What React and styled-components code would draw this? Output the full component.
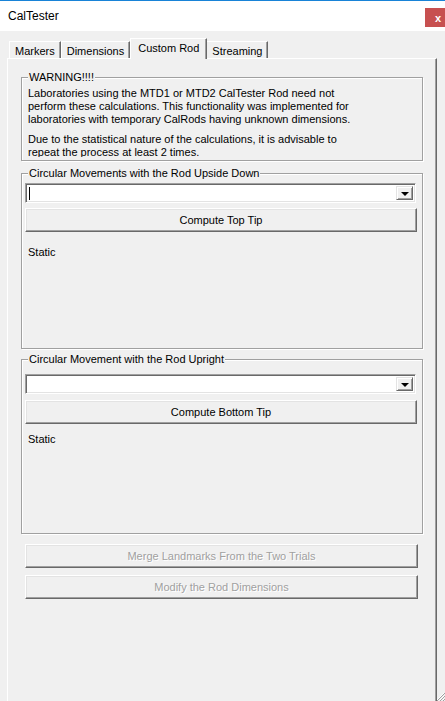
import styled, { createGlobalStyle } from 'styled-components';

const GlobalStyle = createGlobalStyle`
  html, body {
    margin: 0;
    padding: 0;
    background: #f0f0f0;
  }
  body {
    font-family: "Liberation Sans", Arial, sans-serif;
    font-size: 11px;
    color: #000;
  }
`;

const Window = styled.div`
  width: 445px;
  height: 701px;
  overflow: hidden;
  display: flex;
  flex-direction: column;
  border-top: 1px solid #1883d7;
  box-sizing: border-box;
  background: #f0f0f0;
`;

const TitleBar = styled.div`
  height: 30px;
  flex: none;
  background: #fff;
  display: flex;
  align-items: flex-start;
  padding-left: 8px;
`;

const Title = styled.span`
  font-size: 12px;
  line-height: 12px;
  margin-top: 9px;
`;

const CloseButton = styled.div`
  margin-left: auto;
  margin-top: 7px;
  width: 20px;
  height: 19px;
  background: #c75050;
  color: #fff;
  font-weight: bold;
  font-size: 11px;
  display: flex;
  align-items: center;
  justify-content: center;
  padding-left: 6px;
  box-sizing: border-box;
`;

const Body = styled.div`
  flex: 1;
  display: flex;
  flex-direction: column;
  padding: 7px 8px 0 7px;
  position: relative;
`;

const TabStrip = styled.div`
  display: flex;
  align-items: flex-end;
  height: 20px;
  padding-left: 2px;
`;

const Tab = styled.div`
  height: ${p => (p.active ? 21 : 17)}px;
  padding: ${p => (p.active ? '0 7px' : '0 5px')};
  margin: ${p => (p.active ? '0 -1px -1px 0' : '0')};
  box-sizing: border-box;
  display: flex;
  align-items: ${p => (p.active ? 'flex-start' : 'center')};
  padding-top: ${p => (p.active ? 3 : 1)}px;
  background: #f0f0f0;
  border-top: 1px solid #fff;
  border-left: 1px solid #fff;
  border-right: 1px solid #696969;
  box-shadow: inset -1px 0 0 #a0a0a0;
  position: relative;
  z-index: ${p => (p.active ? 2 : 1)};
  font-size: 11px;
  white-space: nowrap;
`;

const Panel = styled.div`
  flex: 1;
  display: flex;
  flex-direction: column;
  border-top: 1px solid #fff;
  border-left: 1px solid #fff;
  border-right: 1px solid #696969;
  box-shadow: inset -1px 0 0 #a0a0a0;
  padding: 0 13px 0 13px;
  box-sizing: border-box;
`;

const GroupBox = styled.div`
  position: relative;
  margin-top: ${p => p.top}px;
  height: ${p => p.height}px;
  flex: none;
  box-sizing: border-box;
  border: 1px solid #a0a0a0;
  box-shadow: 1px 1px 0 #fff, inset 1px 1px 0 #fff;
  padding: ${p => p.pad}px 5px 0 3px;
  display: flex;
  flex-direction: column;
`;

const Caption = styled.span`
  position: absolute;
  top: -7px;
  left: 6px;
  padding: 0 1px 0 1px;
  background: #f0f0f0;
  line-height: 13px;
  font-size: 11px;
`;

const WarningText = styled.div`
  height: ${p => p.height}px;
  overflow: hidden;
  padding-left: 3px;
  line-height: 13px;

  p {
    margin: 0 0 7px 0;
  }
`;

const Combo = styled.div`
  height: 20px;
  flex: none;
  box-sizing: border-box;
  background: #fff;
  border-top: 1px solid #a0a0a0;
  border-left: 1px solid #a0a0a0;
  border-right: 1px solid #fff;
  border-bottom: 1px solid #fff;
  box-shadow: inset 1px 1px 0 #696969, inset -1px -1px 0 #e3e3e3;
  display: flex;
  align-items: center;
  padding: 2px 2px 2px 3px;
  margin-right: 1px;
`;

const Caret = styled.span`
  width: 1px;
  height: 13px;
  background: #000;
`;

const DropButton = styled.div`
  margin-left: auto;
  width: 17px;
  height: 14px;
  box-sizing: border-box;
  background: #f0f0f0;
  border-top: 1px solid #e3e3e3;
  border-left: 1px solid #e3e3e3;
  border-right: 1px solid #696969;
  border-bottom: 1px solid #696969;
  box-shadow: inset 1px 1px 0 #fff, inset -1px -1px 0 #a0a0a0;
  display: flex;
  align-items: center;
  justify-content: center;

  &::after {
    content: '';
    border-left: 4px solid transparent;
    border-right: 4px solid transparent;
    border-top: 4px solid #000;
    margin-top: 1px;
  }
`;

const Button = styled.div`
  height: 24px;
  flex: none;
  box-sizing: border-box;
  margin-top: ${p => p.top || 0}px;
  background: #f0f0f0;
  border-top: 1px solid #fff;
  border-left: 1px solid #fff;
  border-right: 1px solid #696969;
  border-bottom: 1px solid #696969;
  box-shadow: inset -1px -1px 0 #a0a0a0, inset 1px 1px 0 #e3e3e3;
  display: flex;
  align-items: center;
  justify-content: center;
  color: ${p => (p.disabled ? '#a0a0a0' : '#000')};
  text-shadow: ${p => (p.disabled ? '1px 1px 0 #fff' : 'none')};
  font-size: 11px;
`;

const OuterButton = styled(Button)`
  margin-left: 4px;
  margin-right: 5px;
`;

const StaticLabel = styled.div`
  margin-top: ${p => p.top}px;
  padding-left: 3px;
  line-height: 13px;
`;

const Grip = styled.svg`
  position: absolute;
  right: 0;
  bottom: 0;
`;

const tabs = ['Markers', 'Dimensions', 'Custom Rod', 'Streaming'];

export default function App() {
  return (
    <>
      <GlobalStyle />
      <Window>
        <TitleBar>
          <Title>CalTester</Title>
          <CloseButton>x</CloseButton>
        </TitleBar>
        <Body>
          <TabStrip>
            {tabs.map(t => (
              <Tab key={t} active={t === 'Custom Rod'}>{t}</Tab>
            ))}
          </TabStrip>
          <Panel>
            <GroupBox top={18} height={84} pad={9}>
              <Caption>WARNING!!!!</Caption>
              <WarningText height={70}>
                <p>
                  Laboratories using the MTD1 or MTD2 CalTester Rod need not<br />
                  perform these calculations. This functionality was implemented for<br />
                  laboratories with temporary CalRods having unknown dimensions.
                </p>
                <p>
                  Due to the statistical nature of the calculations, it is advisable to<br />
                  repeat the process at least 2 times.
                </p>
              </WarningText>
            </GroupBox>

            <GroupBox top={12} height={176} pad={9}>
              <Caption>Circular Movements with the Rod Upside Down</Caption>
              <Combo>
                <Caret />
                <DropButton />
              </Combo>
              <Button top={5}>Compute Top Tip</Button>
              <StaticLabel top={14}>Static</StaticLabel>
            </GroupBox>

            <GroupBox top={10} height={175} pad={14}>
              <Caption>Circular Movement with the Rod Upright</Caption>
              <Combo>
                <DropButton />
              </Combo>
              <Button top={6}>Compute Bottom Tip</Button>
              <StaticLabel top={9}>Static</StaticLabel>
            </GroupBox>

            <OuterButton top={10} disabled>Merge Landmarks From the Two Trials</OuterButton>
            <OuterButton top={7} disabled>Modify the Rod Dimensions</OuterButton>
          </Panel>
          <Grip width="10" height="10" viewBox="0 0 10 10">
            <path d="M9 2 L2 9 M9 5 L5 9 M9 8 L8 9" stroke="#fff" strokeWidth="1" />
            <path d="M10 2 L2 10 M10 5 L5 10 M10 8 L8 10" stroke="#a0a0a0" strokeWidth="1" />
          </Grip>
        </Body>
      </Window>
    </>
  );
}
